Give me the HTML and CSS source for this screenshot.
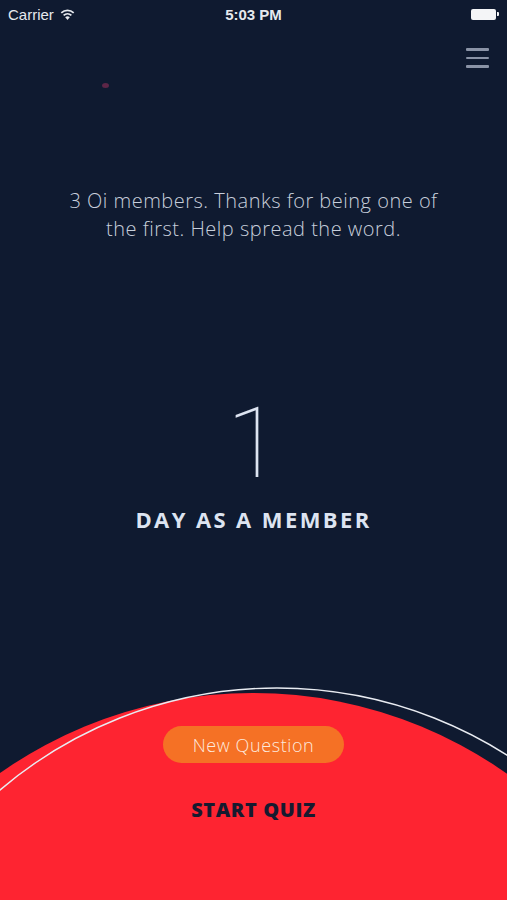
FILE: index.html
```html
<!DOCTYPE html>
<html lang="en">
<head>
  <meta charset="UTF-8" />
  <meta name="viewport" content="width=device-width, initial-scale=1.0"/>
  <title>Oi</title>
  <link rel="stylesheet" href="styles.css">
</head>
<body>
  <div class="screen">

    <!-- status bar -->
    <div class="status">
      <div class="status-left">
        <span>Carrier</span>
        <svg class="wifi" width="15" height="11" viewBox="0 0 15 11">
          <path d="M7.5 11 L5.2 8.3 A3.4 3.4 0 0 1 9.8 8.3 Z" fill="#e6e9ee"/>
          <path d="M3.6 6.4 A5.8 5.8 0 0 1 11.4 6.4" stroke="#e6e9ee" stroke-width="1.7" fill="none"/>
          <path d="M1.3 3.9 A9 9 0 0 1 13.7 3.9" stroke="#e6e9ee" stroke-width="1.7" fill="none"/>
        </svg>
      </div>
      <div class="status-time">5:03 PM</div>
      <div class="status-right">
        <div class="battery"></div>
        <div class="battery-nub"></div>
      </div>
    </div>

    <!-- top bar -->
    <div class="topbar">
      <div class="mark"></div>
      <div class="menu">
        <span></span>
        <span></span>
        <span></span>
      </div>
    </div>

    <p class="intro">3 Oi members. Thanks for being one of<br>the first. Help spread the word.</p>

    <div class="count">
      <div class="count-num">1</div>
      <div class="count-label">DAY AS A MEMBER</div>
    </div>

    <!-- quiz panel -->
    <div class="quiz">
      <svg class="quiz-bg" width="507" height="220" viewBox="0 0 507 220">
        <circle cx="253" cy="453" r="440" fill="#fe2431"/>
        <circle cx="277" cy="435" r="427" fill="none" stroke="#e9ecf2" stroke-width="1.4"/>
      </svg>
      <button class="new-question">New Question</button>
      <div class="start-quiz">START QUIZ</div>
    </div>

  </div>
</body>
</html>
```

FILE: styles.css
```css
body {
  margin: 0;
  background-color: #0f1a30;
}
.screen {
  width: 507px;
  height: 900px;
  overflow: hidden;
  display: flex;
  flex-direction: column;
  background-color: #0f1a30;
  font-family: 'Open Sans', sans-serif;
}
.status {
  height: 28px;
  display: flex;
  align-items: center;
  justify-content: space-between;
  padding: 0 8px;
  font-family: 'Liberation Sans', sans-serif;
  font-size: 15px;
  color: #e6e9ee;
}
.status-left {
  width: 120px;
  display: flex;
  align-items: center;
  gap: 6px;
}
.status-time {
  font-weight: bold;
}
.status-right {
  width: 120px;
  display: flex;
  justify-content: flex-end;
  align-items: center;
}
.battery {
  width: 25px;
  height: 11px;
  border-radius: 2px;
  background: #f4f5f7;
}
.battery-nub {
  width: 2px;
  height: 4px;
  margin-left: 1px;
  background: #f4f5f7;
  border-radius: 0 1px 1px 0;
}
.topbar {
  height: 70px;
  display: flex;
  justify-content: space-between;
  align-items: flex-start;
  padding-right: 18px;
}
.mark {
  width: 7px;
  height: 5px;
  margin-left: 102px;
  margin-top: 55px;
  border-radius: 50%;
  background: #5d2647;
}
.menu {
  margin-top: 20px;
  width: 23px;
  display: flex;
  flex-direction: column;
  gap: 6px;
}
.menu span {
  height: 2.5px;
  background: #8a93a6;
  border-radius: 1px;
}
.intro {
  margin: 89px 0 0;
  text-align: center;
  font-size: 20px;
  font-weight: 300;
  letter-spacing: 0.5px;
  line-height: 28px;
  color: #c7cedb;
}
.count {
  margin-top: 151px;
  display: flex;
  flex-direction: column;
  align-items: center;
  color: #dde4f1;
}
.count-num {
  font-family: Roboto, sans-serif;
  font-weight: 100;
  font-size: 98px;
  line-height: 100px;
}
.count-label {
  margin-top: 10px;
  font-size: 22px;
  font-weight: 700;
  letter-spacing: 2.4px;
}
.quiz {
  margin-top: auto;
  height: 220px;
  position: relative;
  display: flex;
  flex-direction: column;
  align-items: center;
}
.quiz-bg {
  position: absolute;
  top: 0;
  left: 0;
}
.new-question {
  position: relative;
  margin-top: 46px;
  width: 181px;
  height: 37px;
  border: none;
  border-radius: 19px;
  background: #f57125;
  color: #fde9de;
  font-family: 'Open Sans', sans-serif;
  font-size: 18px;
  font-weight: 300;
  letter-spacing: 0.6px;
}
.start-quiz {
  position: relative;
  margin-top: 33px;
  font-size: 20px;
  font-weight: 800;
  letter-spacing: 0.6px;
  color: #161a2f;
}
```
